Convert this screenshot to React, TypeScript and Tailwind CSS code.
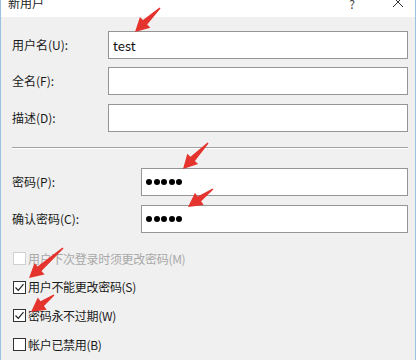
import React from 'react';

const FONT = { fontFamily: '"Noto Sans CJK SC", "Noto Sans", sans-serif' };

type Pt = [number, number];

// red callout arrow: thin tail, fat head
const arrowPoints = (tail: Pt, tip: Pt) => {
  const dx = tip[0] - tail[0];
  const dy = tip[1] - tail[1];
  const len = Math.hypot(dx, dy);
  const ux = dx / len, uy = dy / len;
  const nx = -uy, ny = ux;
  const headLen = 14, headW = 7.5, shaftW = 3, tailW = 0.7;
  const bx = tip[0] - ux * headLen, by = tip[1] - uy * headLen;
  const p = (x: number, y: number) => `${x.toFixed(1)},${y.toFixed(1)}`;
  return [
    p(tail[0] + nx * tailW, tail[1] + ny * tailW),
    p(bx + nx * shaftW, by + ny * shaftW),
    p(bx + nx * headW, by + ny * headW),
    p(tip[0], tip[1]),
    p(bx - nx * headW, by - ny * headW),
    p(bx - nx * shaftW, by - ny * shaftW),
    p(tail[0] - nx * tailW, tail[1] - ny * tailW),
  ].join(' ');
};

const arrows: [Pt, Pt][] = [
  [[160, 8], [135, 32]],
  [[208, 143], [183, 169]],
  [[213, 189], [188, 207]],
  [[63, 248], [29, 278]],
  [[54, 295], [31, 312]],
];

const Field = ({ label, inputLeft, children, className = '' }: { label: string; inputLeft: number; children?: React.ReactNode; className?: string }) => (
  <div className={`flex items-center h-[28px] ${className}`}>
    <div className="text-[12px] text-[#1a1a1a] leading-none" style={{ width: inputLeft - 12 }}>{label}</div>
    <div className="flex-1 h-full bg-white border border-[#959595] flex items-center pl-[3px]">{children}</div>
  </div>
);

const Dots = () => (
  <div className="flex gap-[1.5px] pl-[1px]">
    {[0, 1, 2, 3, 4].map(i => <span key={i} className="w-[6px] h-[6px] rounded-full bg-black" />)}
  </div>
);

const Check = ({ label, checked, disabled }: { label: string; checked?: boolean; disabled?: boolean }) => (
  <div className="flex items-center h-[13px]">
    <div className={`w-[13px] h-[13px] border bg-white flex items-center justify-center ${disabled ? 'border-[#d0d0d0]' : 'border-[#333]'}`}>
      {checked && (
        <svg width="11" height="11" viewBox="0 0 11 11">
          <polyline points="1.5,5.5 4.3,8.3 9.5,2.2" fill="none" stroke="#222" strokeWidth="1.2" />
        </svg>
      )}
    </div>
    <span className={`ml-[2px] text-[12px] leading-none tracking-[-0.3px] ${disabled ? 'text-[#a8a8a8]' : 'text-[#1a1a1a]'}`}>{label}</span>
  </div>
);

export default function App() {
  return (
    <div className="relative w-[418px] h-[360px] bg-white overflow-hidden" style={FONT}>
      <div className="w-[416px] h-full border-l border-r border-[#9cc0e0] flex flex-col">
        {/* title bar */}
        <div className="h-[17px] bg-white flex items-start relative shrink-0">
          <span className="ml-[7px] mt-[-6px] text-[12px] text-[#222]">新用户</span>
          <span className="ml-auto mr-[37px] mt-[-5px] text-[12px] text-[#444]">?</span>
          <svg className="mr-[11px] mt-[-3px]" width="12" height="10" viewBox="0 0 12 10">
            <path d="M1 0 L11 10 M11 0 L1 10" stroke="#333" strokeWidth="1" />
          </svg>
        </div>
        {/* body */}
        <div className="flex-1 bg-[#f0f0f0] pl-[11px] pr-[7px] pt-[14px] flex flex-col">
          <Field label="用户名(U):" inputLeft={108}>
            <span className="text-[13px] text-[#111] leading-none ml-[1px]">test</span>
          </Field>
          <Field label="全名(F):" inputLeft={108} className="mt-[8px]" />
          <Field label="描述(D):" inputLeft={108} className="mt-[9px]" />
          <div className="mt-[15px] border-t border-[#a0a0a0] border-b border-b-white" />
          <Field label="密码(P):" inputLeft={141} className="mt-[19px]"><Dots /></Field>
          <Field label="确认密码(C):" inputLeft={141} className="mt-[9px]"><Dots /></Field>
          <div className="mt-[19px] flex flex-col gap-[15.7px] pl-[1px]">
            <Check label="用户下次登录时须更改密码(M)" disabled />
            <Check label="用户不能更改密码(S)" checked />
            <Check label="密码永不过期(W)" checked />
            <Check label="帐户已禁用(B)" />
          </div>
        </div>
      </div>
      {/* red annotation arrows */}
      <svg className="absolute inset-0 pointer-events-none" width="418" height="360">
        {arrows.map(([t, h], i) => (
          <polygon key={i} points={arrowPoints(t, h)} fill="#e5332e" />
        ))}
      </svg>
    </div>
  );
}
